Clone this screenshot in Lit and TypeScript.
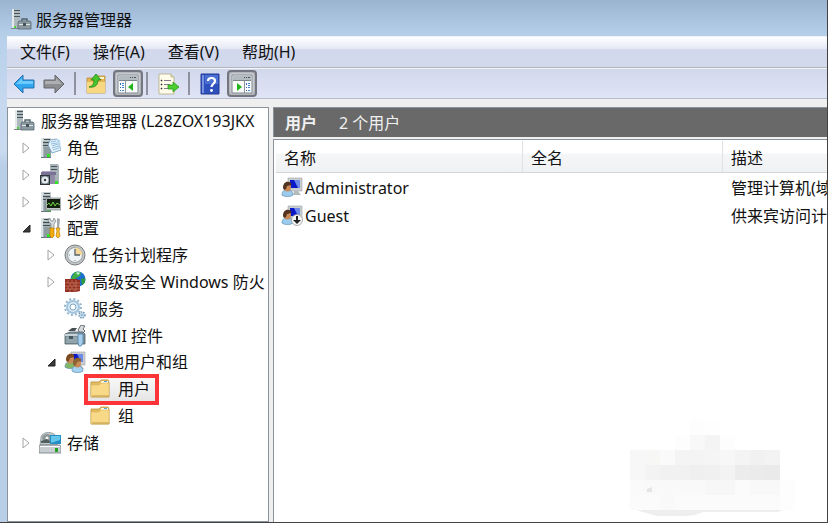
import { LitElement, html, svg, css, TemplateResult } from "lit";
import { customElement, property, state } from "lit/decorators.js";
import { classMap } from "lit/directives/class-map.js";

// A grey tower, shared by most of the server icons.
const tower = svg`
  <path d="M2 1h9l1 2v17H2z" fill="#a9b5b8"/>
  <path d="M2 1h2v19H2z" fill="#dde4e5"/>
  <path d="M4 1h8v3H4z" fill="#c8d0d2"/>
  <path d="M5 2h6v1H5zM4 5h7v1H4zM4 8h7v1H4z" fill="#3f4b50"/>
  <path d="M5 10h7v10H5z" fill="#8d9da0"/>
  <path d="M2 20h10v1H2z" fill="#68777b"/>
  <path d="M8 17h3v3H8z" fill="#35e329"/>`;

const person = (x: number, y: number, hair: string, shirt: string) => svg`
  <g transform="translate(${x} ${y})">
    <path d="M0 13c0-4 2-5 5-5s6 1 6 5c-2 2-9 2-11 0z" fill=${shirt} stroke="#5f91b5" stroke-width=".7"/>
    <ellipse cx="5.5" cy="5" rx="3.5" ry="4.5" fill="#c98a58"/>
    <path d="M1 6C1 1 4-1 7 0c2 0 3 2 2 3L5 4 4 7 2 8z" fill=${hair}/>
  </g>`;

const monitor = svg`
  <path d="M7 1h14v13H7z" fill="#c9cdcf" stroke="#9da3a6" stroke-width=".6"/>
  <path d="M9 3h10v8H9z" fill="#0a17c8"/>
  <path d="M13 3h6v8h-2z" fill="#6d8ae8"/>
  <path d="M13 14h4l3 4h-8z" fill="#b5babd"/>`;

const windowPane = (side: "left" | "right") => svg`
  <path d="M1 2h20v18H1z" fill="#fafbfb" stroke="#7d858c"/>
  <path d="M2 3h18v4H2z" fill="#b3bbc1"/>
  <path d="M13 4h1v1h-1zM15 4h1v1h-1zM17 4h2v1h-2z" fill="#4d565d"/>
  <path d="M2 7h18v1H2z" fill="#7d858c"/>
  ${side === "left"
    ? svg`<path d="M8 8h1v12H8z" fill="#8c959b"/><path d="M3 10h1v2H3zM3 14h1v1H3zM3 17h1v1H3z" fill="#356db6"/><path d="M5 10h2v1H5zM5 12h2v1H5zM5 14h2v1H5zM5 17h2v1H5z" fill="#4884cc"/><path d="M16 10v8l-5-4z" fill="#22b51b"/>`
    : svg`<path d="M13 8h1v12h-1z" fill="#8c959b"/><path d="M15 10h1v2h-1zM15 14h1v1h-1zM15 17h1v1h-1z" fill="#356db6"/><path d="M17 10h2v1h-2zM17 12h2v1h-2zM17 14h2v1h-2zM17 17h2v1h-2z" fill="#4884cc"/><path d="M6 10v8l5-4z" fill="#22b51b"/>`}`;

const icons: Record<string, TemplateResult<2>> = {
  server: svg`
    <path d="M2 0h8v19H2z" fill="#aebabe"/><path d="M2 0h2v19H2z" fill="#e3e8e9"/>
    <path d="M4 1h6v1H4zM4 4h6v1H4zM4 7h6v1H4z" fill="#4b565b"/><path d="M4 17h2v2H4z" fill="#45d23a"/>
    <path d="M1 19h10v1H1z" fill="#7c888c"/>
    <path d="M12 12v-2h5v2" fill="none" stroke="#55646a" stroke-width="1.4"/>
    <path d="M9 12h11l1 1v7H8v-7z" fill="#8b9ba1" stroke="#596a71" stroke-width=".8"/>
    <path d="M9 15h11v1H9z" fill="#dfe6e8"/><path d="M13 14h3v3h-3z" fill="#455359"/>`,
  roles: svg`${tower}
    <path d="M11 3l7-1 4 11-9 3-4-8z" fill="#e4f2fc" stroke="#6f98b8" stroke-width=".8"/>
    <path d="M12 5l5-1M12 7l6-1M13 9l6-2M13 11l7-2M14 13l6-2" stroke="#7eaed4" stroke-width=".8"/>
    <path d="M17 2l4 1 1 10z" fill="#b9d8ee"/>`,
  features: svg`
    <path d="M11 0h8l1 2v18h-9z" fill="#a7b3b6"/><path d="M12 2h6v1h-6zM12 5h6v1h-6z" fill="#465257"/>
    <path d="M16 17h3v3h-3z" fill="#35e329"/>
    <path d="M2 8h15v3H2z" fill="#7a7196"/><path d="M3 7h12v1H3z" fill="#aaa6c0"/><path d="M11 11h5v9h-5z" fill="#8f8aa6"/>
    <path d="M1 11h10v10H1z" fill="#2e3438"/><path d="M2 12h8v8H2z" fill="#6f7b82"/>
    <circle cx="6" cy="16" r="3.5" fill="#e8edf0"/><circle cx="6" cy="16" r="1.2" fill="#353c41"/>`,
  diagnostics: svg`${tower}
    <path d="M7 7h15v12H7z" fill="#bfc5c6" stroke="#6f787a" stroke-width=".6"/>
    <path d="M8 8h13v9H8z" fill="#13200f"/>
    <path d="M8 14l2-2 2 3 2-4 2 4 2-3 3 2" fill="none" stroke="#6fd23f"/>`,
  config: svg`${tower}
    <path d="M10 1l2 3 2 0 1-3 2 3-2 3v5h-3V7l-3-3z" fill="#d7dcde" stroke="#737c80" stroke-width=".7"/>
    <path d="M11 11h4v8l-2 2-2-2z" fill="#f4ac0c" stroke="#b97800" stroke-width=".7"/>
    <path d="M18 1l3 1-1 9h-2z" fill="#a1a8aa"/>
    <path d="M17 11h4l-1 3 1 5-2 2-2-2 1-5z" fill="#ffc22c" stroke="#b97800" stroke-width=".7"/>`,
  clock: svg`
    <circle cx="11" cy="11" r="10" fill="#c3c6c7" stroke="#777d80"/>
    <circle cx="11" cy="11" r="7.5" fill="#edf3f7" stroke="#9aa0a2"/>
    <path d="M11 3.500a7.500 7.500 0 0 1 7.500 7.500H11z" fill="#f5d79a"/>
    <path d="M11 5v6h5" fill="none" stroke="#53616a" stroke-width="1.3"/>
    <path d="M5 11h1M11 16v1" stroke="#7f8a90"/>`,
  firewall: svg`
    <circle cx="14" cy="8" r="7.500" fill="#1c6fd0"/>
    <path d="M10 2c3-2 6-1 7 0l-1 3-4 2-3 3-2-2z" fill="#3fae43"/><path d="M17 8l4-1c1 4-1 6-3 7z" fill="#2d9b3c"/>
    <path d="M12 2c1-1 3-1 4 0l-2 2z" fill="#c6f4ed"/>
    <path d="M1 8h11l4 1v11l-4 1H1z" fill="#93301f"/>
    <path d="M1 12h15M1 15h15M1 18h15M4 9v3M8 9v3M6 12v3M10 12v3M4 15v3M8 15v3M6 18v3M10 18v3M12 9v12" stroke="#d08a76" stroke-width=".6"/>`,
  gears: svg`
    <circle cx="9" cy="9" r="6" fill="#d8eaf6" stroke="#a3c4dc" stroke-width="2"/>
    <circle cx="9" cy="9" r="8" fill="none" stroke="#93b5cf" stroke-width="2" stroke-dasharray="2 2.200"/>
    <circle cx="9" cy="9" r="3" fill="#fff" stroke="#80a8c6"/>
    <circle cx="18" cy="17" r="3" fill="#cde3f1" stroke="#779fbd" stroke-width="1.500" stroke-dasharray="1.500 1"/>
    <circle cx="18" cy="17" r="1" fill="#fff" stroke="#86abc5"/>`,
  toolbox: svg`
    <path d="M4 6l4-3h5l-2 3" fill="#454f54"/><path d="M14 5l3-5 4 1-2 3 2 2-4 4z" fill="#d6dadd" stroke="#4b5357" stroke-width=".8"/>
    <path d="M1 9l5-2h13l2 2v10H1z" fill="#81939b" stroke="#4e6068" stroke-width=".8"/>
    <path d="M1 9h14v2H1z" fill="#c8d3d7"/><path d="M2 12h12v6H2z" fill="#92a5ad"/><path d="M5 11h4v3H5z" fill="#465961"/>
    <path d="M14 9h5v9l-2 3h-2l-1-3z" fill="#a6cfee" stroke="#5382a5" stroke-width=".8"/>`,
  usersGroup: svg`${monitor}
    ${person(1, 3, "#7b4b1f", "#83b765")}${person(8, 7, "#8a6332", "#a6d2f1")}`,
  folder: svg`
    <path d="M1 4h8l2-2h7l1 2v15H1z" fill="#e6bd5e" stroke="#b9923d" stroke-width=".8"/>
    <path d="M11 3h7v2h-7z" fill="#fffbe9"/><path d="M14 3h3v1h-3z" fill="#4da5df"/>
    <path d="M1 7h8l2-2h8v14H1z" fill="#f8d988" stroke="#d7b263" stroke-width=".6"/>
    <path d="M2 18h17" stroke="#be984b"/>`,
  storage: svg`
    <path d="M2 5c1-6 14-6 15 0l1 8H1z" fill="#c6cccd" stroke="#7d878a" stroke-width=".7"/>
    <ellipse cx="8" cy="6" rx="5" ry="4" fill="#8c9799"/><circle cx="8" cy="6" r="1.500" fill="#f7f7f7"/><path d="M2 9l6-2 5 4H2z" fill="#51605f"/>
    <path d="M11 3h11v9H11z" fill="#238ec5"/><path d="M12 4h9v4l-9 3z" fill="#65c5ea"/>
    <path d="M1 13h20l1 2v6H0v-6z" fill="#c7cdd0" stroke="#717a7e" stroke-width=".8"/><path d="M1 14h20v1H1z" fill="#fff"/><path d="M16 16h3v4h-3z" fill="#22a322"/>`,
  user: svg`${monitor}${person(1, 5, "#51331f", "#9bcbed")}`,
  userDisabled: svg`${monitor}${person(1, 5, "#51331f", "#9bcbed")}
    <circle cx="16" cy="15" r="5.500" fill="#f7f7f7" stroke="#9a9a9a" stroke-width=".8"/>
    <path d="M15 11h2v4h3l-4 4-4-4h3z" fill="#222"/>`,
  back: svg`<path d="M1 11l9-9v5h11v8H10v5z" fill="#2fa6ef" stroke="#2870ae" stroke-linejoin="round"/><path d="M3 11l6-6v3h11v3z" fill="#6ccbfb"/>`,
  forward: svg`<path d="M21 11l-9-9v5H1v8h11v5z" fill="#8b8d90" stroke="#646669" stroke-linejoin="round"/><path d="M19 11l-6-6v3H2v3z" fill="#adafb1"/>`,
  up: svg`
    <path d="M2 5h7l2-2h9v17H2z" fill="#e5b550" stroke="#b68e3a" stroke-width=".8"/><path d="M12 4h7v2h-7z" fill="#fff5cf"/>
    <path d="M2 9h18v11H2z" fill="#f8d781"/>
    <path d="M4 14c4-1 5-4 5-7H6l5-6 5 6h-3c0 5-3 8-9 7z" fill="#48c52b" stroke="#24821a" stroke-width=".8"/>`,
  paneLeft: windowPane("left"),
  paneRight: windowPane("right"),
  exportList: svg`
    <path d="M2 1h12l3 3v17H2z" fill="#fffce9" stroke="#b3aa83" stroke-width=".8"/><path d="M14 1v3h3" fill="#e5dec0" stroke="#b3aa83" stroke-width=".8"/>
    <path d="M4 7h1v1H4zM4 11h1v1H4zM4 15h1v1H4z" fill="#333" stroke="#333" stroke-width=".6"/><path d="M7 7h7v1H7zM7 11h6v1H7zM7 15h5v1H7z" fill="#807b91"/>
    <path d="M11 12h5V9l6 5-6 5v-3h-5z" fill="#4acd2f" stroke="#289d1c" stroke-width=".8"/>`,
  help: svg`
    <path d="M2 1h18v20H2z" fill="#2d50bd" stroke="#253d93"/><path d="M3 2h2v18H3z" fill="#7893e0"/><path d="M6 2h13v9H6z" fill="#4b70d4"/>
    <path d="M9 8c0-4 7-4 7 0 0 3-3.500 3-3.500 6" fill="none" stroke="#fff" stroke-width="2.200"/><circle cx="12.500" cy="17.500" r="1.400" fill="#fff"/>`,
};

@customElement("app-icon")
class AppIcon extends LitElement {
  @property() name = "folder";
  static styles = css`
    :host { display: block; flex: none; width: 22px; height: 22px; }
    svg { display: block; width: 100%; height: 100%; }
  `;
  render() {
    return html`<svg viewBox="0 0 22 22" aria-hidden="true">${icons[this.name]}</svg>`;
  }
}

interface Node { label: string; icon: string; level: number; open?: boolean }

const nodes: Node[] = [
  { label: "服务器管理器 (L28ZOX193JKX", icon: "server", level: 0 },
  { label: "角色", icon: "roles", level: 1, open: false },
  { label: "功能", icon: "features", level: 1, open: false },
  { label: "诊断", icon: "diagnostics", level: 1, open: false },
  { label: "配置", icon: "config", level: 1, open: true },
  { label: "任务计划程序", icon: "clock", level: 2, open: false },
  { label: "高级安全 Windows 防火", icon: "firewall", level: 2, open: false },
  { label: "服务", icon: "gears", level: 2 },
  { label: "WMI 控件", icon: "toolbox", level: 2 },
  { label: "本地用户和组", icon: "usersGroup", level: 2, open: true },
  { label: "用户", icon: "folder", level: 3 },
  { label: "组", icon: "folder", level: 3 },
  { label: "存储", icon: "storage", level: 1, open: false },
];

@customElement("console-tree")
class ConsoleTree extends LitElement {
  @state() private selected = 10;
  static styles = css`
    :host { display: block; overflow: hidden; background: #fff; border: 1px solid #8b929b; padding-right: 2px; }
    .tree { list-style: none; margin: 0; padding: 0; display: grid; grid-auto-rows: 1fr; height: 348px; overflow: hidden; }
    .row { display: flex; align-items: center; min-width: 0; }
    .level-0 { padding-left: 5px; }
    .level-1 { padding-left: 9px; }
    .level-2 { padding-left: 34px; }
    .level-3 { padding-left: 60px; }
    button { border: 0; padding: 0; background: none; font: inherit; color: inherit; }
    .toggle { flex: none; width: 22px; height: 22px; display: flex; align-items: center; padding-left: 5px; box-sizing: border-box; }
    .toggle svg { width: 10px; height: 14px; }
    .item { display: flex; align-items: center; gap: 6px; height: 23px; white-space: nowrap; line-height: 22px; }
    .selected { background: linear-gradient(#f8f8f8, #e5e5e5); box-shadow: 0 0 0 4px #fa3437; margin-left: -2px; padding: 0 5px 0 2px; }
  `;
  private arrow(n: Node) {
    if (n.level === 0) return null;
    if (n.open === undefined) return html`<span class="toggle"></span>`;
    return html`<button class="toggle" aria-label=${`${n.open ? "折叠" : "展开"} ${n.label}`}>
      <svg viewBox="0 0 10 14">${n.open
        ? svg`<path d="M8 4v7H1z" fill="#3c3c3c" stroke="#222"/>`
        : svg`<path d="M1 2l6 5-6 5z" fill="#fff" stroke="#a3a3a3"/>`}</svg></button>`;
  }
  render() {
    return html`<ul class="tree">${nodes.map((n, i) => html`
      <li class="row level-${n.level}">
        ${this.arrow(n)}
        <button class=${classMap({ item: true, selected: i === this.selected })} @click=${() => (this.selected = i)}>
          <app-icon name=${n.icon}></app-icon><span>${n.label}</span>
        </button>
      </li>`)}</ul>`;
  }
}

const users = [
  { name: "Administrator", icon: "user", description: "管理计算机(域)的内置帐户" },
  { name: "Guest", icon: "userDisabled", description: "供来宾访问计算机或访问域的内置帐户" },
];

@customElement("user-list")
class UserList extends LitElement {
  static styles = css`
    :host { display: flex; flex-direction: column; min-width: 0; overflow: hidden; }
    .heading { display: flex; align-items: center; gap: 22px; height: 29px; padding-left: 11px; background: #696969; border: solid #8b929b; border-width: 1px 0 0 1px; color: #f0f0f0; }
    .heading h2 { margin: 0; font-size: 16px; font-weight: 700; }
    .body { flex: 1; margin-top: 2px; padding: 1px 0 0 2px; background: #fff; border: solid #8b929b; border-width: 1px 0 0 1px; overflow: hidden; }
    table { width: 100%; table-layout: fixed; border-collapse: separate; border-spacing: 0; }
    .name { width: 247px; }
    .full { width: 200px; }
    th, td { box-sizing: border-box; padding: 0 0 0 8px; text-align: left; font-weight: 400; white-space: nowrap; overflow: hidden; }
    th { height: 32px; padding-top: 2px; background: linear-gradient(#fff 40%, #f5f6f8 41%, #f0f1f3); border-right: 1px solid #dfe1e4; border-bottom: 1px solid #d5d5d5; }
    th:last-child { border-right: 0; }
    td { height: 28px; padding-top: 2px; }
    td:first-child { padding-left: 5px; }
    .user { display: flex; align-items: center; gap: 2px; }
  `;
  render() {
    return html`
      <div class="heading"><h2>用户</h2><span>${users.length} 个用户</span></div>
      <div class="body">
        <table>
          <thead><tr><th class="name">名称</th><th class="full">全名</th><th>描述</th></tr></thead>
          <tbody>${users.map(u => html`<tr>
            <td><span class="user"><app-icon name=${u.icon}></app-icon>${u.name}</span></td><td></td><td>${u.description}</td>
          </tr>`)}</tbody>
        </table>
      </div>`;
  }
}

// Tile shades of the pixelated stamp: column, row, grey level.
const tileRow = (row: number, shades: string[]) =>
  shades.map((shade, col): [number, number, string] => [col, row, shade]);

const tiles: [number, number, string][] = [
  [4, 0, "#fdfdfd"], [5, 0, "#fefefe"],
  [3, 1, "#fdfdfd"], [4, 1, "#f8f8f8"], [5, 1, "#f4f4f4"], [6, 1, "#fdfdfd"],
  ...tileRow(2, ["#f7f7f7", "#f7f7f5", "#fafafa", "#f4f4f4", "#f4f4f4", "#f5f5f5", "#f7f7f7", "#f4f4f4", "#f1f1f1", "#f3f3f3"]),
  ...tileRow(3, ["#f7f7f7", "#f3f3f3", "#f1f1f1", "#f1f1f1", "#efefef", "#f0f0f0", "#f3f3f3", "#ececec", "#ebebeb", "#eaeaea"]),
  ...tileRow(4, ["#fafafa", "#f9f9f9", "#f9f9f9", "#f9f9f9", "#f9f9f9", "#f7f7f7", "#f7f7f7", "#fbfbfb", "#f8f8f8", "#f8f8f8", "#fdfdfd"]),
  ...tileRow(5, ["#fbfbfb", "#fbfbfb", "#f9f9f9", "#fbfbfb", "#fbfbfb", "#fbfbfb", "#fbfbfb", "#fbfbfb", "#fbfbfb", "#fbfbfb", "#fdfdfd"]),
];

@customElement("app-root")
class AppRoot extends LitElement {
  static styles = css`
    :host { display: block; font: 16px/22px "Noto Sans", "Noto Sans CJK SC", sans-serif; color: #111; }
    .window { position: relative; box-sizing: border-box; min-height: 100vh; display: flex; flex-direction: column; overflow: hidden; border: solid #434343; border-width: 0 1px 1px 0; background: linear-gradient(#9ab3d0, #b7d0ea 36px, #c5d8ef 100px, #cadbf0 150px, #b9cfe8 165px, #b9cfe8); }
    .title { display: flex; align-items: center; gap: 4px; height: 32px; padding: 4px 0 0 10px; }
    .title h1 { margin: 0; font-size: 16px; font-weight: 400; }
    .client { flex: 1; display: flex; flex-direction: column; margin-left: 7px; background: #efefef; }
    .menu { display: flex; gap: 23px; height: 30px; padding-left: 13px; border-top: 1px solid #edf2fa; border-bottom: 1px solid #b4b6bd; background: linear-gradient(#fff, #e5e8f5 12px, #d3d9ec 12px, #d3d9ec); }
    button { border: 0; padding: 0; background: none; font: inherit; color: inherit; }
    .tools { display: flex; align-items: center; height: 29px; padding-left: 2px; border-top: 1px solid #f4f5fa; border-bottom: 1px solid #b8bccb; background: linear-gradient(#d2d8ec, #dfe5f5); }
    .tool { display: flex; align-items: center; justify-content: center; width: 30px; height: 27px; }
    .pressed { box-sizing: border-box; margin: 0 -2px 0 2px; border: 2px solid #74777f; border-radius: 4px; background: #d4d7df; box-shadow: inset 0 0 3px #777; }
    .sep { width: 2px; height: 23px; margin: 0 5px; background: #8e929e; }
    .panes { flex: 1; display: grid; grid-template-columns: 262px minmax(0, 1fr); gap: 4px; padding-top: 8px; }
    .stamp { position: absolute; right: 32px; bottom: 6px; width: 165px; height: 96px; }
  `;
  private tool(icon: string, label: string, pressed = false) {
    return html`<button class=${classMap({ tool: true, pressed })} aria-label=${label}><app-icon name=${icon}></app-icon></button>`;
  }
  render() {
    return html`<div class="window">
      <header class="title"><app-icon name="server"></app-icon><h1>服务器管理器</h1></header>
      <div class="client">
        <nav class="menu">${["文件(F)", "操作(A)", "查看(V)", "帮助(H)"].map(m => html`<button>${m}</button>`)}</nav>
        <div class="tools">
          ${this.tool("back", "后退")}${this.tool("forward", "前进")}
          <span class="sep"></span>
          ${this.tool("up", "向上")}${this.tool("paneLeft", "显示/隐藏控制台树", true)}
          <span class="sep"></span>
          ${this.tool("exportList", "导出列表")}
          <span class="sep"></span>
          ${this.tool("help", "帮助")}${this.tool("paneRight", "显示/隐藏操作窗格", true)}
        </div>
        <main class="panes"><console-tree></console-tree><user-list></user-list></main>
      </div>
      <svg class="stamp" viewBox="0 0 165 96" aria-hidden="true">
        ${tiles.map(([c, r, fill]) => svg`<rect x=${c * 15} y=${r * 15} width="15" height="15" fill=${fill}/>`)}
        <path d="M6 90h147l-5 2H73l-8 3-9 1H27l-11-3z" fill="#eeeeee"/>
        <path d="M17 69l5-2v5h-5z" fill="#e4e4e4"/>
      </svg>
    </div>`;
  }
}
